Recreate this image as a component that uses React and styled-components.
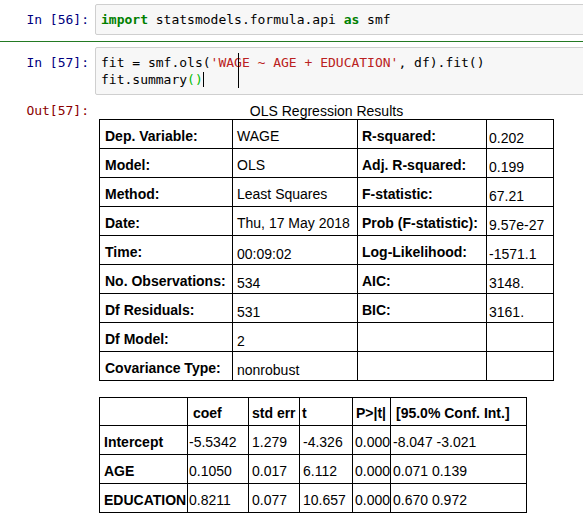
import React from 'react';
import styled, { createGlobalStyle } from 'styled-components';

const GlobalStyle = createGlobalStyle`
  body {
    margin: 0;
    background: #fff;
    overflow: hidden;
  }
`;

const Notebook = styled.div`
  width: 660px;
  font-family: "Liberation Sans", Arial, sans-serif;
  color: #000;
`;

const Cell = styled.div`
  display: flex;
  flex-direction: column;
  padding-top: ${p => p.$top}px;
  padding-bottom: 6px;
  border-top: ${p => (p.$selected ? '1px solid #237a23' : '0')};
`;

const Row = styled.div`
  display: flex;
  margin-top: ${p => p.$gap || 0}px;
`;

const Prompt = styled.div`
  flex: 0 0 89px;
  text-align: right;
  font-family: "DejaVu Sans Mono", monospace;
  font-size: 13px;
  line-height: 17px;
  padding-top: ${p => (p.$out ? 0 : 7)}px;
  color: ${p => (p.$out ? '#8b0000' : '#000080')};
  white-space: pre;
`;

const InputArea = styled.div`
  position: relative;
  flex: 1;
  margin-left: 6px;
  border: 1px solid #cfcfcf;
  border-radius: 2px;
  background: #f7f7f7;
  padding: 6px 5px;
  font-family: "DejaVu Sans Mono", monospace;
  font-size: 13px;
  line-height: 17px;
  white-space: pre;
`;

const Keyword = styled.span`
  color: #008000;
  font-weight: bold;
`;

const Str = styled.span`
  color: #ba2121;
`;

const Bracket = styled.span`
  color: #00bb00;
`;

const Caret = styled.span`
  display: inline-block;
  width: 0;
  height: 15px;
  border-left: 1px solid #000;
  vertical-align: -3px;
`;

/* mouse I-beam sitting over the code */
const MouseBeam = styled.div`
  position: absolute;
  left: 142px;
  top: 5px;
  width: 1px;
  height: 35px;
  background: #000;
`;

const OutputBody = styled.div`
  margin-left: 6px;
  padding: 1px 0 0 4px;
`;

const SummaryTable = styled.table`
  border-collapse: collapse;
  table-layout: fixed;
  width: ${p => p.$width}px;
  font-size: 14px;
  margin-top: ${p => p.$gap || 0}px;
`;

const Caption = styled.caption`
  font-size: 14px;
  line-height: 16px;
  text-align: center;
`;

const Tr = styled.tr`
  height: ${p => p.$h || 29}px;
`;

const Th = styled.th`
  border: 1px solid #000;
  padding: 3px 0 0 ${p => p.$pad ?? 4}px;
  text-align: left;
  font-weight: bold;
  white-space: nowrap;
  vertical-align: middle;
`;

const Td = styled.td`
  border: 1px solid #000;
  padding: ${p => (p.$drop ? 7 : 3)}px 0 0 ${p => p.$pad ?? 3}px;
  text-align: left;
  white-space: nowrap;
  vertical-align: middle;
`;

const info = [
  ['Dep. Variable:', 'WAGE', 'R-squared:', '0.202'],
  ['Model:', 'OLS', 'Adj. R-squared:', '0.199'],
  ['Method:', 'Least Squares', 'F-statistic:', '67.21'],
  ['Date:', 'Thu, 17 May 2018', 'Prob (F-statistic):', '9.57e-27'],
  ['Time:', '00:09:02', 'Log-Likelihood:', '-1571.1'],
  ['No. Observations:', '534', 'AIC:', '3148.'],
  ['Df Residuals:', '531', 'BIC:', '3161.'],
  ['Df Model:', '2', '', ''],
  ['Covariance Type:', 'nonrobust', '', ''],
];

const coefHead = ['', 'coef', 'std err', 't', 'P>|t|', '[95.0% Conf. Int.]'];
const coefHeadPad = [4, 5, 3, 2, 3, 5];
const coefPad = [4, 1, 3, 3, 2, 2];
const coefWidths = [88, 61, 51, 53, 38, 136];

const coefs = [
  ['Intercept', '-5.5342', '1.279', '-4.326', '0.000', '-8.047 -3.021'],
  ['AGE', '0.1050', '0.017', '6.112', '0.000', '0.071 0.139'],
  ['EDUCATION', '0.8211', '0.077', '10.657', '0.000', '0.670 0.972'],
];

const App = () => {
  return (
    <>
      <GlobalStyle />
      <Notebook>
        <Cell $top={4}>
          <Row>
            <Prompt>In [56]:</Prompt>
            <InputArea>
              <Keyword>import</Keyword> statsmodels.formula.api <Keyword>as</Keyword> smf
            </InputArea>
          </Row>
        </Cell>

        <Cell $top={5} $selected>
          <Row>
            <Prompt>In [57]:</Prompt>
            <InputArea>
              fit = smf.ols(<Str>'WAGE ~ AGE + EDUCATION'</Str>, df).fit(){'\n'}
              fit.summary<Bracket>()</Bracket><Caret />
              <MouseBeam />
            </InputArea>
          </Row>

          <Row $gap={7}>
            <Prompt $out>Out[57]:</Prompt>
            <OutputBody>
              <SummaryTable $width={454}>
                <Caption>OLS Regression Results</Caption>
                <colgroup>
                  <col style={{ width: 133 }} />
                  <col style={{ width: 125 }} />
                  <col style={{ width: 129 }} />
                  <col style={{ width: 67 }} />
                </colgroup>
                <tbody>
                  {info.map((r, i) => (
                    <Tr key={r[0]}>
                      <Th $pad={5}>{r[0]}</Th>
                      <Td $pad={4} $drop={i >= 4}>{r[1]}</Td>
                      <Th $pad={4}>{r[2]}</Th>
                      <Td $pad={2} $drop>{r[3]}</Td>
                    </Tr>
                  ))}
                </tbody>
              </SummaryTable>

              <SummaryTable $width={427} $gap={16}>
                <colgroup>
                  {coefWidths.map((w, i) => (
                    <col key={i} style={{ width: w }} />
                  ))}
                </colgroup>
                <tbody>
                  <Tr $h={28}>
                    {coefHead.map((h, i) => (
                      <Th key={i} $pad={coefHeadPad[i]}>{h}</Th>
                    ))}
                  </Tr>
                  {coefs.map(r => (
                    <Tr key={r[0]}>
                      <Th $pad={coefPad[0]}>{r[0]}</Th>
                      {r.slice(1).map((v, i) => (
                        <Td key={i} $pad={coefPad[i + 1]}>{v}</Td>
                      ))}
                    </Tr>
                  ))}
                </tbody>
              </SummaryTable>
            </OutputBody>
          </Row>
        </Cell>
      </Notebook>
    </>
  );
};

export default App;
